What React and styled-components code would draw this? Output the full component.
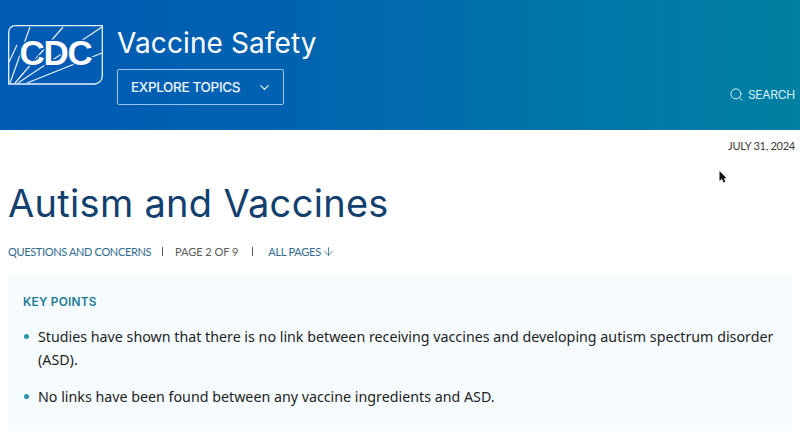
import React from "react";
import styled, { createGlobalStyle } from "styled-components";
import { ChevronDown, Search, ArrowDown } from "lucide-react";

const Global = createGlobalStyle`
  html, body { margin: 0; padding: 0; background: #fff; overflow: hidden; }
  body { font-family: "Inter", "Liberation Sans", sans-serif; }
`;
const Page = styled.div`
  position: relative;
  width: 800px;
  height: 431px;
  overflow: hidden;
`;
const Header = styled.header`
  height: 130px;
  box-sizing: border-box;
  padding: 25px 5px 0 8px;
  display: flex;
  align-items: flex-start;
  gap: 14px;
  background: linear-gradient(90deg, #005ab4 0%, #0062b0 35%, #0075a8 70%, #0080a2 100%);
`;
const LogoSvg = styled.svg`
  flex: none;
  width: 95px;
  height: 60px;
  display: block;
`;
const Brand = styled.div`
  display: flex;
  flex-direction: column;
  align-items: flex-start;
  gap: 7px;
`;
const SiteTitle = styled.div`
  font-family: "Inter", sans-serif;
  font-size: 28px;
  line-height: 37px;
  color: #fff;
  letter-spacing: 0.1px;
`;
const Explore = styled.button`
  width: 167px;
  height: 36px;
  box-sizing: border-box;
  padding: 0 11px 0 13px;
  display: flex;
  align-items: center;
  justify-content: space-between;
  background: transparent;
  border: 1px solid #9ec5ee;
  border-radius: 2px;
  color: #eef6ff;
  font-family: "Inter", sans-serif;
  font-size: 13.5px;
  font-weight: 500;
  letter-spacing: -0.35px;
`;
const SearchBox = styled.div`
  margin-left: auto;
  align-self: flex-end;
  margin-bottom: 28px;
  display: flex;
  align-items: center;
  gap: 4px;
  color: #d9f3ff;
  font-family: "Inter", sans-serif;
  font-size: 12px;
  letter-spacing: -0.25px;
`;
const DateLine = styled.div`
  padding: 9px 5px 0 0;
  text-align: right;
  font-family: "Lato", sans-serif;
  font-size: 11px;
  line-height: 14px;
  letter-spacing: -0.25px;
  color: #3a3a3a;
`;
const Title = styled.h1`
  margin: 22px 0 0 8px;
  font-family: "Inter", sans-serif;
  font-weight: 400;
  font-size: 38px;
  line-height: 56px;
  color: #12406e;
  letter-spacing: 0.3px;
`;
const Meta = styled.div`
  margin: 12px 0 0 8px;
  display: flex;
  align-items: center;
  height: 16px;
  font-family: "Lato", sans-serif;
  font-size: 11px;
  letter-spacing: -0.35px;
  color: #5a5a5a;
`;
const MetaLink = styled.span`
  color: #2f6b91;
  display: inline-flex;
  align-items: center;
  gap: 1px;
`;
const PageLabel = styled.span`
  letter-spacing: -0.05px;
`;
const AllPages = styled.span`
  letter-spacing: -0.25px;
`;
const Sep = styled.span`
  width: 1px;
  height: 9px;
  background: #555;
  margin: 0 ${(p) => p.$before}px 0 ${(p) => p.$after}px;
`;
const Card = styled.section`
  margin: 17px 8px 0;
  padding: 18px 15px 0;
  height: 200px;
  background: #f6fbff;
`;
const CardTitle = styled.div`
  font-family: "Inter", sans-serif;
  font-size: 11.8px;
  font-weight: 600;
  line-height: 16px;
  letter-spacing: 0.25px;
  color: #1c7a93;
`;
const List = styled.ul`
  margin: 15px 0 0;
  padding: 0;
  list-style: none;
  display: flex;
  flex-direction: column;
  gap: 14px;
`;
const Item = styled.li`
  position: relative;
  padding-left: 15px;
  font-family: "Noto Sans", sans-serif;
  font-size: 14.25px;
  line-height: 23px;
  color: #1e1e1e;
  &::before {
    content: "";
    position: absolute;
    left: 1px;
    top: 9px;
    width: 5px;
    height: 5px;
    border-radius: 50%;
    background: #2a93ad;
  }
`;
const Cursor = styled.svg`
  position: absolute;
  left: 718px;
  top: 170px;
  width: 9px;
  height: 14px;
`;

const Logo = () => (
  <LogoSvg viewBox="0 0 95 60" fill="none">
    <path d="M7 .7H94.3V51a8 8 0 0 1-8 8H.7V7A6.3 6.3 0 0 1 7 .7Z" stroke="#e8f3ff" strokeWidth="1.3" />
    <g stroke="#e8f3ff" strokeWidth="1.2">
      <path d="M2 58 22 2" />
      <path d="M7 58 55 2" />
      <path d="M10 58 94 2" />
      <path d="M19 58 94 28" />
      <path d="M1 37 9 20" />
    </g>
    <text x="47.5" y="40" textAnchor="middle" fontFamily="Liberation Sans, sans-serif" fontWeight="700" fontSize="35" letterSpacing="-1.2" fill="#fff" stroke="#0058b6" strokeWidth="3" paintOrder="stroke">CDC</text>
  </LogoSvg>
);

export default function App() {
  return (
    <Page>
      <Global />
      <Header>
        <Logo />
        <Brand>
          <SiteTitle>Vaccine Safety</SiteTitle>
          <Explore>
            EXPLORE TOPICS
            <ChevronDown size={15} strokeWidth={2} />
          </Explore>
        </Brand>
        <SearchBox>
          <Search size={15} strokeWidth={1.6} />
          SEARCH
        </SearchBox>
      </Header>
      <DateLine>JULY 31, 2024</DateLine>
      <Title>Autism and Vaccines</Title>
      <Meta>
        <MetaLink>QUESTIONS AND CONCERNS</MetaLink>
        <Sep $after={11} $before={12} />
        <PageLabel>PAGE 2 OF 9</PageLabel>
        <Sep $after={14} $before={15} />
        <MetaLink>
          <AllPages>ALL PAGES</AllPages>
          <ArrowDown size={13} strokeWidth={1.5} />
        </MetaLink>
      </Meta>
      <Card>
        <CardTitle>KEY POINTS</CardTitle>
        <List>
          <Item>
            Studies have shown that there is no link between receiving vaccines and developing autism spectrum disorder (ASD).
          </Item>
          <Item>No links have been found between any vaccine ingredients and ASD.</Item>
        </List>
      </Card>
      <Cursor viewBox="0 0 9 14">
        <path d="M1.5 1V11L4 8.8 5.6 12.6 7.4 11.8 5.8 8.2H8.6Z" fill="#111" />
      </Cursor>
    </Page>
  );
}
